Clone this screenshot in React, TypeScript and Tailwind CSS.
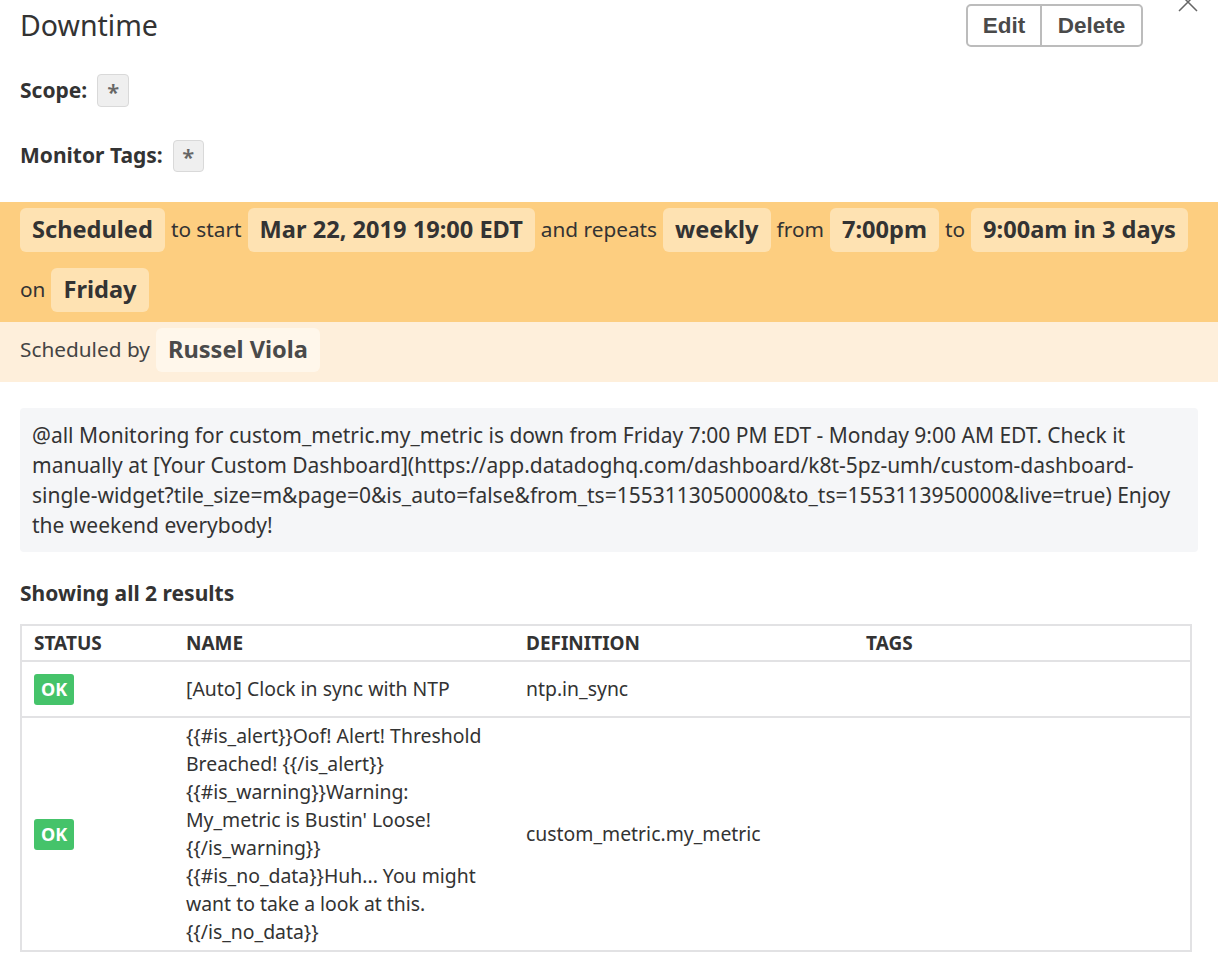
import React from "react";

const Chip = ({ children }: { children: React.ReactNode }) => (
  <span className="inline-flex h-[44px] items-center rounded-[6px] bg-[#fee2b2] px-3 text-[23.6px] font-bold text-[#333]">
    {children}
  </span>
);

const Ok = () => (
  <span className="inline-flex h-[31px] w-[40px] items-center justify-center rounded-[3px] bg-[#45c36a] text-[18px] font-bold text-white">
    OK
  </span>
);

export default function App() {
  return (
    <div className="relative min-h-screen bg-white font-['Noto_Sans',sans-serif] text-[#333]">
      {/* close */}
      <svg className="absolute right-[20px] top-[-8px] h-[20px] w-[20px]" viewBox="0 0 20 20">
        <path d="M1 1 L19 19 M19 1 L1 19" stroke="#666" strokeWidth="1.5" fill="none" />
      </svg>

      <div className="px-5">
        <div className="flex h-[52px] items-start justify-between pr-[55px] pt-[4px]">
          <h1 className="mt-[1px] text-[28.5px] leading-[40px] text-[#333]">Downtime</h1>
          <div className="flex h-[43px] overflow-hidden rounded-[5px] border-2 border-[#bcbcbc] font-['Liberation_Sans',sans-serif] text-[22.5px] font-bold text-[#4a4a4a]">
            <button className="w-[74px] border-r-2 border-[#bcbcbc]">Edit</button>
            <button className="w-[99px]">Delete</button>
          </div>
        </div>

        <div className="mt-[22px] flex h-[33px] items-center gap-[10px]">
          <span className="text-[21px] font-bold">Scope:</span>
          <span className="flex h-[33px] w-[32px] items-center justify-center rounded-[4px] border border-[#d9d9d9] bg-[#efefef] pt-[1px] text-[22px] font-semibold text-[#666]">*</span>
        </div>
        <div className="mt-[33px] flex h-[32px] items-center gap-[10px]">
          <span className="text-[21px] font-bold">Monitor Tags:</span>
          <span className="flex h-[32px] w-[31px] items-center justify-center rounded-[4px] border border-[#d9d9d9] bg-[#efefef] pt-[1px] text-[22px] font-semibold text-[#666]">*</span>
        </div>
      </div>

      <div className="mt-[30px] flex flex-wrap items-center gap-x-[6px] gap-y-4 bg-[#fdce80] pb-[10px] pl-5 pr-2 pt-[6px] text-[20.8px] text-[#333]">
        <Chip>Scheduled</Chip>
        <span>to start</span>
        <Chip>Mar 22, 2019 19:00 EDT</Chip>
        <span>and repeats</span>
        <Chip>weekly</Chip>
        <span>from</span>
        <Chip>7:00pm</Chip>
        <span>to</span>
        <Chip>9:00am in 3 days</Chip>
        <span>on</span>
        <Chip>Friday</Chip>
      </div>
      <div className="flex items-center gap-[6px] bg-[#feefdb] px-5 pb-[10px] pt-[6px] text-[20.8px] text-[#444]">
        <span>Scheduled by</span>
        <span className="inline-flex h-[44px] items-center rounded-[6px] bg-[#fff7eb] px-3 text-[23.6px] font-bold text-[#4a4a4a]">Russel Viola</span>
      </div>

      <div className="px-5">
        <div className="mt-[26px] rounded-[4px] bg-[#f5f6f8] px-3 py-[12px] text-[21px] leading-[30px] text-[#333]">
          @all Monitoring for custom_metric.my_metric is down from Friday 7:00 PM EDT - Monday 9:00 AM EDT. Check it manually at [Your Custom Dashboard](https://app.datadoghq.com/dashboard/k8t-5pz-umh/custom-dashboard-single-widget?tile_size=m&amp;page=0&amp;is_auto=false&amp;from_ts=1553113050000&amp;to_ts=1553113950000&amp;live=true) Enjoy the weekend everybody!
        </div>

        <div className="mt-[26px] text-[21px] font-bold leading-[30px]">Showing all 2 results</div>

        <table className="mt-[16px] w-[1172px] table-fixed border-collapse border-2 border-[#e2e2e4] text-[19.4px] text-[#333]">
          <colgroup>
            <col className="w-[153px]" />
            <col className="w-[340px]" />
            <col className="w-[340px]" />
            <col />
          </colgroup>
          <thead>
            <tr className="h-[36px] border-b-2 border-[#e2e2e4] text-left text-[19px] font-bold">
              <th className="px-3">STATUS</th>
              <th className="px-3">NAME</th>
              <th className="px-3">DEFINITION</th>
              <th className="px-3">TAGS</th>
            </tr>
          </thead>
          <tbody>
            <tr className="h-[56px] border-b-2 border-[#e2e2e4]">
              <td className="px-3 align-middle"><Ok /></td>
              <td className="px-3">[Auto] Clock in sync with NTP</td>
              <td className="px-3">ntp.in_sync</td>
              <td className="px-3"></td>
            </tr>
            <tr>
              <td className="px-3 align-middle"><Ok /></td>
              <td className="px-3 py-[4px] leading-[28px]">
                {"{{#is_alert}}Oof! Alert! Threshold Breached! {{/is_alert}} {{#is_warning}}Warning: My_metric is Bustin' Loose! {{/is_warning}} {{#is_no_data}}Huh... You might want to take a look at this. {{/is_no_data}}"}
              </td>
              <td className="px-3">custom_metric.my_metric</td>
              <td className="px-3"></td>
            </tr>
          </tbody>
        </table>
      </div>
    </div>
  );
}
